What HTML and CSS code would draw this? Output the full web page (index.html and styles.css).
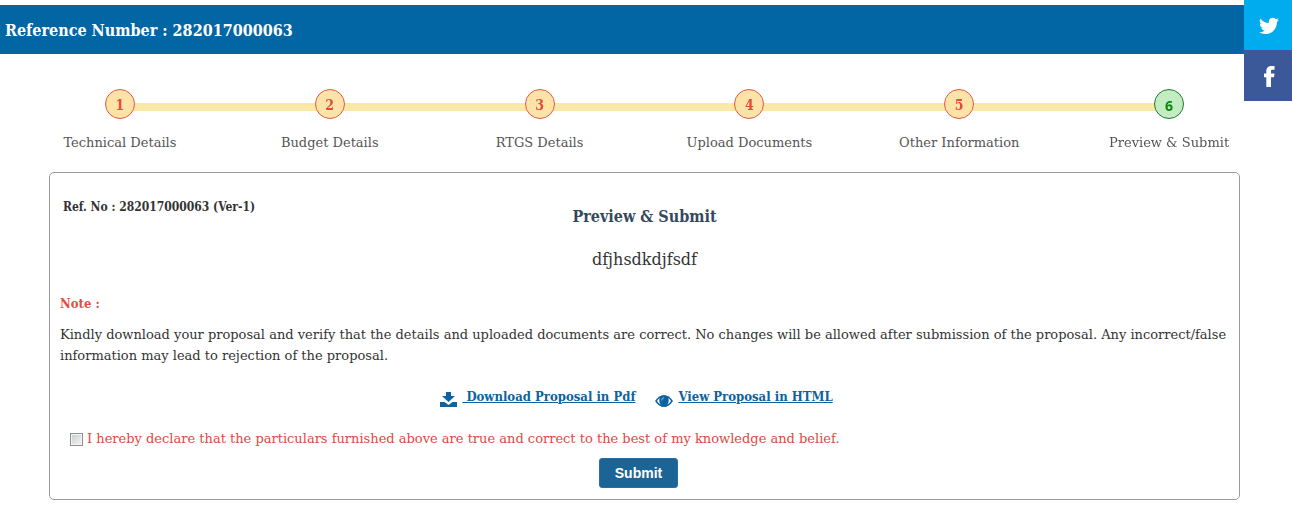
FILE: index.html
```html
<!DOCTYPE html>
<html lang="en">
<head>
  <meta charset="UTF-8" />
  <meta name="viewport" content="width=device-width, initial-scale=1" />
  <title>Preview &amp; Submit</title>
  <link rel="stylesheet" href="styles.css">
</head>
<body>

  <h1 class="ref-bar">Reference Number : 282017000063</h1>

  <div class="social">
    <a href="#" class="twitter" aria-label="Twitter">
      <svg viewBox="0 0 24 24" width="20" height="20" fill="#fff"><path d="M23.9 4.6a10 10 0 0 1-2.8.8 4.9 4.9 0 0 0 2.2-2.7c-1 .6-2 1-3.1 1.2a4.9 4.9 0 0 0-8.4 4.5C7.7 8.2 4.1 6.2 1.7 3.2a4.9 4.9 0 0 0 1.5 6.5 4.9 4.9 0 0 1-2.2-.6v.1a4.9 4.9 0 0 0 3.9 4.8 5 5 0 0 1-2.2.1 4.9 4.9 0 0 0 4.6 3.4A9.9 9.9 0 0 1 0 19.5a14 14 0 0 0 7.5 2.200c9.100 0 14-7.500 14-14v-.600a10 10 0 0 0 2.400-2.500z"/></svg>
    </a>
    <a href="#" class="facebook" aria-label="Facebook">
      <svg viewBox="0 0 11 21" width="11" height="21" fill="#fff"><path d="M10.5 0v3.800H8.500C7.300 3.800 7 4.300 7 5.200v2.300h3.500l-.500 3.800H7V21H2.300v-9.700H0V7.500h2.300V5C2.300 1.700 4.500 0 7.500 0z"/></svg>
    </a>
  </div>

  <ol class="steps">
    <li class="step"><span class="circle">1</span>Technical Details</li>
    <li class="step"><span class="circle">2</span>Budget Details</li>
    <li class="step"><span class="circle">3</span>RTGS Details</li>
    <li class="step"><span class="circle">4</span>Upload Documents</li>
    <li class="step"><span class="circle">5</span>Other Information</li>
    <li class="step active"><span class="circle">6</span>Preview &amp; Submit</li>
  </ol>

  <form class="panel">
    <div class="panel-head">
      <p class="ref-no">Ref. No : 282017000063 (Ver-1)</p>
      <h2>Preview &amp; Submit</h2>
    </div>
    <p class="proposal-title">dfjhsdkdjfsdf</p>

    <h3>Note :</h3>
    <p class="note">Kindly download your proposal and verify that the details and uploaded documents are correct. No changes will be allowed after submission of the proposal. Any incorrect/false information may lead to rejection of the proposal.</p>

    <div class="links">
      <svg viewBox="0 0 17 15" width="17" height="15" fill="#0d639f"><path d="M6 0h5v4h4l-6.500 6L2 4h4z"/><path d="M0 10h4.500l4 3 4-3H17v5H0z"/></svg>
      <a href="#" class="download">&nbsp;Download Proposal in Pdf</a>
      <svg viewBox="0 0 18 12" width="18" height="12"><path d="M0 6Q4 0 9 0t9 6q-4 6-9 6T0 6z" fill="#0d639f"/><path d="M4.500 3Q3 4.300 2 6q1.500 2.500 4 3.700Q4.300 8.200 4.300 6 4.300 4.300 4.500 3zM13.500 3Q15 4.300 16 6q-1.500 2.500-4 3.700 1.700-1.500 1.700-3.700 0-1.700-.200-3z" fill="#fff"/><path d="M6.700 5.500Q6.800 3 9 2.700" fill="none" stroke="#9cc3de"/></svg>
      <a href="#">View Proposal in HTML</a>
    </div>

    <div class="declare">
      <input type="checkbox" id="declare">
      <label for="declare">I hereby declare that the particulars furnished above are true and correct to the best of my knowledge and belief.</label>
    </div>

    <div class="actions">
      <button type="submit">Submit</button>
    </div>
  </form>

</body>
</html>
```
FILE: styles.css
```css
* {
  box-sizing: border-box;
}

body {
  margin: 0;
  padding-top: 5px;
  background-color: #fff;
  color: #333;
  font-family: 'DejaVu Serif', serif;
  font-size: 13px;
  line-height: 21px;
}

h1, h2, h3, p {
  margin: 0;
}

h1, h2, h3, .ref-no, .circle, .links a {
  font-family: 'DejaVu Serif Condensed', 'DejaVu Serif', serif;
  font-weight: bold;
}

.ref-bar {
  padding: 15px 5px 13px;
  background-color: #0265a4;
  color: #fff;
  font-size: 16px;
  line-height: 21px;
}

/* share buttons stuck to the right edge */
.social {
  position: fixed;
  top: 0;
  right: 0;
  width: 48px;
}

.social a {
  display: flex;
  align-items: center;
  justify-content: center;
  height: 50px;
  padding: 2px 0 0 2px;
}

.social .twitter {
  background-color: #00acee;
}

.social .facebook {
  height: 51px;
  background-color: #3b5998;
}

.steps {
  display: grid;
  grid-template-columns: repeat(6, 1fr);
  margin: 35px 18px 19px 15px;
  padding: 0;
  list-style: none;
  color: #555;
}

.step {
  position: relative;
  display: flex;
  flex-direction: column;
  align-items: center;
  gap: 13px;
}

/* bar between this circle and the next one */
.step:not(:last-child)::after {
  content: "";
  position: absolute;
  top: 14px;
  left: 50%;
  width: 100%;
  height: 8px;
  background-color: #fae8a8;
}

.circle {
  position: relative;
  z-index: 1;
  width: 30px;
  height: 30px;
  border: 1px solid #dd5a45;
  border-radius: 50%;
  background-color: #fde3a7;
  color: #e04e3a;
  font-size: 14px;
  line-height: 31px;
  text-align: center;
}

.active .circle {
  border-color: #1d7a2c;
  background-color: #c3ecc3;
  color: #0b870b;
  font-family: 'Open Sans', sans-serif;
}

.panel {
  margin: 0 52px 32px 49px;
  padding: 24px 10px 11px;
  border: 1px solid #999;
  border-radius: 5px;
}

.panel-head {
  display: grid;
  grid-template-columns: 1fr auto 1fr;
}

.ref-no {
  padding-left: 3px;
  font-size: 12px;
}

h2 {
  padding-top: 9px;
  color: #34495e;
  font-size: 16px;
  line-height: 21px;
}

.proposal-title {
  margin: 22px 0 23px;
  font-size: 16px;
  text-align: center;
}

h3 {
  margin-bottom: 10px;
  color: #e04e3f;
  font-size: 13px;
}

.links,
.actions {
  display: flex;
  justify-content: center;
  padding-right: 12px;
}

.links {
  margin: 20px 0 21px;
  padding-right: 16px;
}

.links svg {
  align-self: flex-end;
  margin-right: 5px;
}

.links a {
  color: #0d639f;
}

.links .download {
  margin-right: 20px;
}

.declare {
  display: flex;
  align-items: center;
  gap: 4px;
  padding-left: 10px;
  color: #dc4a42;
}

.declare input {
  appearance: none;
  flex: none;
  width: 13px;
  height: 13px;
  margin: 2px 0 0;
  border: 1px solid #8e8f8f;
  background: linear-gradient(135deg, #c8ccd0, #f4f4f4);
  box-shadow: inset 0 0 0 1px #f4f4f4;
}

.declare input:checked {
  background: #0d639f;
}

.actions {
  margin-top: 9px;
}

button {
  padding: 0 15px;
  height: 30px;
  border: 1px solid #2a6fa3;
  border-radius: 3px;
  background-color: #1c6495;
  color: #fff;
  font-family: 'Liberation Sans', Arial, sans-serif;
  font-size: 14px;
  font-weight: bold;
  cursor: pointer;
}

button:hover {
  background-color: #0d4f7c;
}

@media (max-width: 700px) {
  .steps {
    grid-template-columns: repeat(3, 1fr);
    row-gap: 20px;
  }

  .step::after {
    display: none;
  }

  .panel {
    margin: 0 10px 20px;
  }

  .panel-head {
    grid-template-columns: 1fr;
  }

  .links {
    flex-wrap: wrap;
  }
}
```
